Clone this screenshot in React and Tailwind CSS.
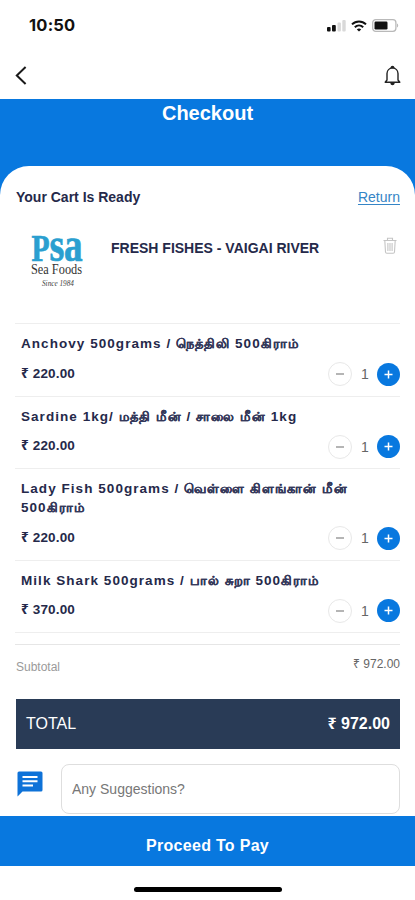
const items = [
  { id: 1, name: [["Anchovy 500grams / "], ["நெத்திலி", "ta"], [" 500"], ["கிராம்", "ta"]], price: "220.00", qty: 1 },
  { id: 2, name: [["Sardine 1kg/ "], ["மத்தி மீன்", "ta"], [" / "], ["சாலை மீன்", "ta"], [" 1kg"]], price: "220.00", qty: 1 },
  { id: 3, name: [["Lady Fish 500grams / "], ["வெள்ளை கிளங்கான் மீன்", "ta"], [" 500"], ["கிராம்", "ta"]], price: "220.00", qty: 1 },
  { id: 4, name: [["Milk Shark 500grams / "], ["பால் சுறா", "ta"], [" 500"], ["கிராம்", "ta"]], price: "370.00", qty: 1 },
];

const StatusBar = () => (
  <div className="flex h-[51px] items-center justify-between pr-[16px] pl-[29px]">
    <span className="font-['Inter'] text-[16.5px] font-bold tracking-[0.2px] text-[#111]">10:50</span>
    <div className="flex items-center">
      <svg width="19" height="12" viewBox="0 0 19 12" className="mr-[5px]">
        <rect x="0" y="7" width="3.6" height="4.5" rx="1" fill="#111" />
        <rect x="5" y="5" width="3.8" height="6.5" rx="1" fill="#111" />
        <rect x="10.5" y="2.5" width="3.4" height="9" rx="1" fill="#d9d9d9" />
        <rect x="15.3" y="0" width="3.4" height="11.5" rx="1" fill="#d9d9d9" />
      </svg>
      <svg width="16" height="12" viewBox="0 0 16 12" className="mr-[5px]" fill="none" stroke="#111" strokeWidth="2">
        <path d="M1 4.4c4-4 10-4 14 0" />
        <path d="M3.8 7.3c2.4-2.3 6-2.3 8.4 0" />
        <path d="M8 11.5 5.8 9.4c1.2-1.1 3.2-1.1 4.4 0z" fill="#111" stroke="none" />
      </svg>
      <svg width="27" height="13" viewBox="0 0 27 13">
        <rect x="0.7" y="0.7" width="23.2" height="11.6" rx="3" fill="#fff" stroke="#b9b9b9" strokeWidth="1.3" />
        <rect x="2.5" y="2.5" width="13" height="8" rx="1.2" fill="#111" />
        <path d="M25 4.5c1.6.6 1.6 3.4 0 4z" fill="#b9b9b9" />
      </svg>
    </div>
  </div>
);

const NavBar = () => (
  <div className="flex h-[48px] items-center justify-between pr-[14px] pl-[15px]">
    <svg width="12" height="19" viewBox="0 0 12 19" fill="none" stroke="#1a1a1a" strokeWidth="2">
      <path d="M10.6 1 1.8 9.5l8.8 8.5" />
    </svg>
    <svg width="17" height="21" viewBox="0 0 17 21" fill="none" stroke="#222" strokeWidth="1.4" strokeLinejoin="round">
      <path d="M1.2 17.2h14.6l-1.8-2.2V8.6c0-3-2.4-5.4-5.5-5.8C5.4 3.2 3 5.6 3 8.6V15z" />
      <path d="M7.2 2.6c.2-1.6 2.4-1.6 2.6 0z" fill="#222" />
      <path d="M7 18.6c.4 1.3 2.6 1.3 3 0z" fill="#222" />
    </svg>
  </div>
);

const Logo = () => (
  <svg width="56" height="58" viewBox="0 0 56 58" className="shrink-0 overflow-visible">
    <g fill="#2a9fd0" stroke="#2a9fd0" strokeWidth="0.7" fontFamily="'Liberation Serif', serif" fontWeight="bold">
      <text fontSize="37" transform="translate(1.5 29.5) scale(.8 1)">P</text>
      <text fontSize="49" transform="translate(19.5 29.5) scale(.78 1)">s</text>
      <text fontSize="49" transform="translate(34 29.5) scale(.76 1)">a</text>
    </g>
    <text x="1" y="43" fontSize="14" fill="#333" textLength="51" lengthAdjust="spacingAndGlyphs" fontFamily="'Liberation Serif', serif">
      Sea Foods
    </text>
    <text x="12" y="54.5" fontSize="8.5" fill="#444" textLength="32" lengthAdjust="spacingAndGlyphs" fontStyle="italic" fontFamily="'Liberation Serif', serif">
      Since 1984
    </text>
  </svg>
);

const TrashIcon = () => (
  <svg width="14" height="17" viewBox="0 0 14 17" fill="none" stroke="#c4c4c4" strokeWidth="1.1">
    <path d="M.5 3.5h13M4.5 3.2V1.2h5v2M1.8 3.5l.7 11.5q.1 1.2 1.3 1.2h6.4q1.2 0 1.3-1.2l.7-11.5M4.9 6v8M7 6v8M9.1 6v8" />
  </svg>
);

const QuantityControl = ({ qty }) => (
  <div className="flex items-center">
    <button className="flex size-[24px] items-center justify-center rounded-full border border-[#e8e8e8] bg-white">
      <span className="h-[2px] w-[8px] bg-[#b5b5b5]" />
    </button>
    <span className="w-[25px] pl-[1px] text-center text-[14px] leading-none text-[#666]">{qty}</span>
    <button className="flex size-[23px] items-center justify-center rounded-full bg-[#0878df]">
      <svg width="9" height="9" viewBox="0 0 9 9" stroke="#fff" strokeWidth="1.5">
        <path d="M4.5 .5v8M.5 4.5h8" />
      </svg>
    </button>
  </div>
);

const CartItem = ({ item }) => (
  <li className="border-b border-[#eeeeee] pt-[10px] pb-[9.5px] pl-[6px]">
    <h3 className="w-[345px] text-[13.5px] leading-[19px] font-bold tracking-[1.05px] text-[#25294a]">
      {item.name.map(([text, lang], i) =>
        lang ? (
          <span key={i} lang={lang} className="text-[13.2px] leading-none tracking-[1.05px] text-[#34385a] [-webkit-text-stroke:0.2px_#34385a]">
            {text}
          </span>
        ) : (
          text
        )
      )}
    </h3>
    <div className="mt-[9px] flex h-[24px] items-center justify-between">
      <span className="text-[13.5px] font-bold tracking-[0.15px] text-[#25294a]">₹ {item.price}</span>
      <QuantityControl qty={item.qty} />
    </div>
  </li>
);

const App = () => (
  <div className="flex h-[900px] w-full flex-col overflow-hidden bg-white font-['Liberation_Sans','Noto_Sans',sans-serif]">
    <StatusBar />
    <NavBar />
    <div className="h-[67px] shrink-0 bg-[#0878df] text-center">
      <h1 className="pt-[2px] text-[20px] leading-[24px] font-bold text-white">Checkout</h1>
    </div>

    <div className="h-[650px] shrink-0 bg-[linear-gradient(#0878df_40px,#fff_40px)]">
      <main className="h-full overflow-hidden rounded-t-[29px] bg-white px-[15px]">
        <div className="flex h-[62px] items-center justify-between pl-[1px]">
          <h2 className="text-[14px] font-bold text-[#25294a]">Your Cart Is Ready</h2>
          <a className="text-[14px] text-[#3585c6] underline underline-offset-2">Return</a>
        </div>

        <div className="flex h-[96px] items-start border-b border-[#eeeeee] pl-[15px]">
          <div className="pt-[3px]">
            <Logo />
          </div>
          <h3 className="mt-[10px] ml-[25px] flex-1 text-[14px] leading-[20px] font-bold text-[#25294a]">
            FRESH FISHES - VAIGAI RIVER
          </h3>
          <div className="mt-[9px] mr-[3px]">
            <TrashIcon />
          </div>
        </div>

        <ul>
          {items.map((item) => (
            <CartItem key={item.id} item={item} />
          ))}
        </ul>

        <div className="mt-[11px] flex h-[55px] items-start justify-between border-t border-[#e6e6e6] pl-[1px]">
          <span className="mt-[14px] text-[12px] leading-[16px] text-[#9a9a9a]">Subtotal</span>
          <span className="mt-[11px] text-[12px] leading-[16px] text-[#666]">₹ 972.00</span>
        </div>

        <div className="ml-[1px] flex h-[50px] items-center justify-between bg-[#293b56] px-[10px] text-[16px] text-white">
          <span>TOTAL</span>
          <span className="font-bold">₹ 972.00</span>
        </div>

        <div className="mt-[15px] flex items-start">
          <svg width="26" height="26" viewBox="0 0 26 26" className="mt-[7px] ml-[2px] shrink-0">
            <path d="M2 .5h22a1.5 1.5 0 0 1 1.5 1.5v17A1.5 1.5 0 0 1 24 20.5H5.5L.5 25.5V2A1.5 1.5 0 0 1 2 .5z" fill="#0e72d8" />
            <path d="M5.5 6h15M5.5 10.3h15M5.5 14.6h10.5" stroke="#fff" strokeWidth="2" />
          </svg>
          <input
            className="ml-[18px] h-[50px] min-w-0 flex-1 rounded-[8px] border border-[#dedede] px-[10px] text-[14px] outline-none placeholder:text-[#777]"
            placeholder="Any Suggestions?"
          />
        </div>
      </main>
    </div>

    <button className="h-[50px] shrink-0 bg-[#0878df] pt-[9px] text-[16px] font-bold tracking-[0.3px] text-white">Proceed To Pay</button>
    <div className="flex h-[34px] items-start justify-center pt-[21px]">
      <div className="h-[5px] w-[148px] rounded-full bg-black" />
    </div>
  </div>
);

export default App;
